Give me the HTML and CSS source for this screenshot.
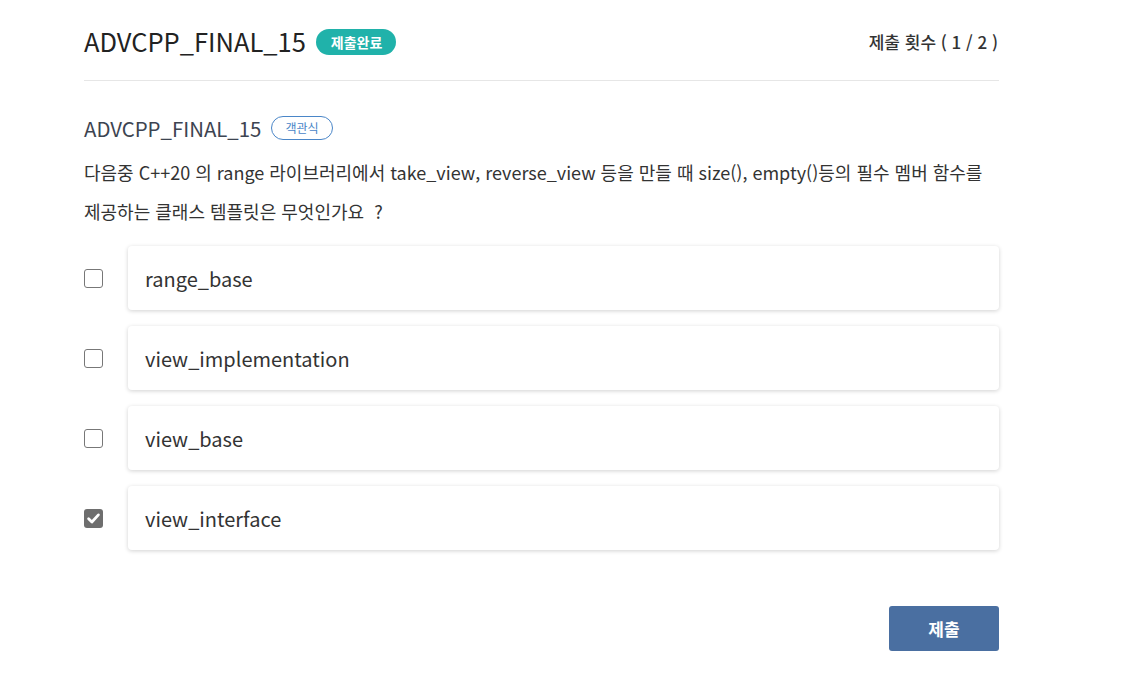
FILE: index.html
```html
<!DOCTYPE html>
<html lang="ko">
<head>
<meta charset="utf-8">
<link rel="stylesheet" href="styles.css">
</head>
<body>
<div class="page">
  <header class="head">
    <div class="head-left">
      <h1 class="title">ADVCPP_FINAL_15</h1>
      <span class="badge-done">제출완료</span>
    </div>
    <div class="count">제출 횟수 ( 1 / 2 )</div>
  </header>
  <section class="question">
    <div class="q-head">
      <h2 class="q-title">ADVCPP_FINAL_15</h2>
      <span class="badge-type">객관식</span>
    </div>
    <p class="q-text">다음중 C++20 의 range 라이브러리에서 take_view, reverse_view 등을 만들 때 size(), empty()등의 필수 멤버 함수를 제공하는 클래스 템플릿은 무엇인가요&nbsp; ?</p>
    <ul class="options">
      <li class="option"><span class="check"></span><div class="card">range_base</div></li>
      <li class="option"><span class="check"></span><div class="card">view_implementation</div></li>
      <li class="option"><span class="check"></span><div class="card">view_base</div></li>
      <li class="option"><span class="check checked"><svg viewBox="0 0 19 19" width="19" height="19"><path d="M4.6 9.8 L7.9 13 L14.4 5.9" fill="none" stroke="#fff" stroke-width="2.8" stroke-linecap="round" stroke-linejoin="round"/></svg></span><div class="card">view_interface</div></li>
    </ul>
    <div class="actions">
      <button class="submit">제출</button>
    </div>
  </section>
</div>
</body>
</html>
```
FILE: styles.css
```css
* { box-sizing: border-box; }
html, body { margin: 0; padding: 0; background: #fff; }
body {
  font-family: "Noto Sans CJK KR", "Noto Sans", sans-serif;
  color: #333;
}
.page {
  width: 915px;
  margin-left: 84px;
  padding-top: 22px;
}
.head {
  display: flex;
  align-items: center;
  justify-content: space-between;
  border-bottom: 1px solid #e6e6e6;
  padding-bottom: 21px;
  height: 59px;
}
.head-left { display: flex; align-items: center; gap: 10px; }
.title {
  margin: 0;
  font-size: 25.5px;
  font-weight: 400;
  color: #222;
  line-height: 36px;
}
.badge-done {
  display: inline-block;
  background: #20b2aa;
  color: #fff;
  font-size: 14px;
  font-weight: 700;
  height: 26px;
  line-height: 26px;
  padding: 0 14px 0 15px;
  border-radius: 13px;
  margin-top: 3px;
}
.count {
  font-size: 17px;
  font-weight: 500;
  color: #333;
  margin-right: 1px;
  margin-top: 2px;
}
.question { padding-top: 34px; }
.q-head { display: flex; align-items: center; gap: 10px; height: 26px; }
.q-title {
  margin: 0;
  font-size: 20.4px;
  font-weight: 400;
  color: #3d4451;
}
.badge-type {
  display: inline-block;
  border: 1px solid #4a86c8;
  color: #4a86c8;
  font-size: 12px;
  height: 24px;
  line-height: 22px;
  padding: 0 13px;
  border-radius: 12px;
}
.q-text {
  margin: 12px 0 0;
  font-size: 18px;
  line-height: 39px;
  color: #333;
}
.options {
  list-style: none;
  margin: 15px 0 0;
  padding: 0;
  display: flex;
  flex-direction: column;
  gap: 16px;
}
.option { display: flex; align-items: center; gap: 25px; }
.check {
  flex: none;
  width: 19px;
  height: 19px;
  border: 1.6px solid #777;
  border-radius: 3px;
  background: #fff;
  display: flex;
  align-items: center;
  justify-content: center;
}
.check.checked { background: #6e6e6e; border: none; }
.check svg { display: block; }
.card {
  flex: 1;
  height: 64px;
  display: flex;
  align-items: center;
  padding-left: 17px;
  font-size: 20px;
  color: #333;
  background: #fff;
  border-radius: 4px;
  box-shadow: 0 1px 4px rgba(0,0,0,0.18);
}
.actions {
  display: flex;
  justify-content: flex-end;
  margin-top: 56px;
}
.submit {
  width: 110px;
  height: 45px;
  border: none;
  border-radius: 3px;
  background: #4a6fa1;
  color: #fff;
  font-family: inherit;
  font-size: 17px;
  font-weight: 700;
}
```
